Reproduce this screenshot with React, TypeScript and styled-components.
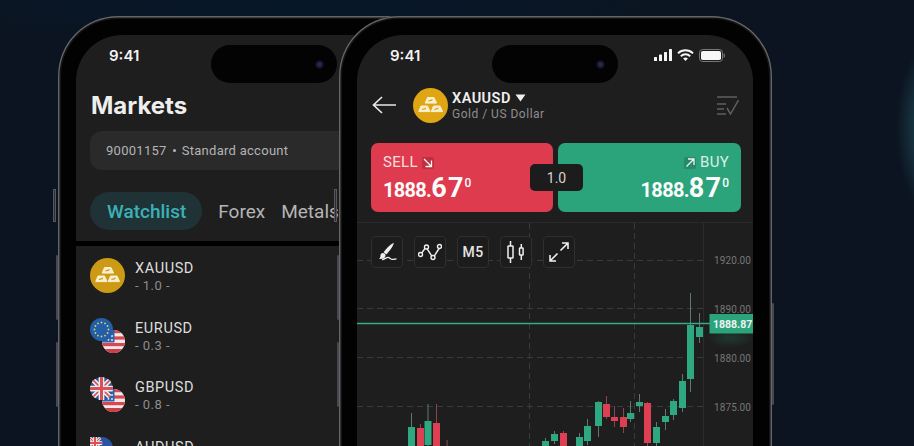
import React from "react";
import styled, { createGlobalStyle } from "styled-components";

const Global = createGlobalStyle`
  html, body { margin: 0; padding: 0; background: #0b1420; }
  body { font-family: "Roboto", "Liberation Sans", sans-serif; }
`;

const Canvas = styled.div`
  position: relative;
  width: 914px;
  height: 446px;
  overflow: hidden;
  background:
    radial-gradient(ellipse 34px 85px at 930px 128px, rgba(38, 92, 104, 0.85), rgba(38, 92, 104, 0) 100%),
    radial-gradient(ellipse 420px 50px at 300px 0, #07182b, rgba(7, 24, 43, 0) 100%),
    #0b1420;
`;

const Phone = styled.div<{ $left: number }>`
  position: absolute;
  left: ${(p) => p.$left}px;
  top: 16px;
  width: 433px;
  height: 700px;
  box-sizing: border-box;
  padding: 19px 19px 0 18px;
  background: #020202;
  border-radius: 60px;
  box-shadow: inset 0 0 0 1.4px #636568, inset 0 0 0 3px #141414;
`;

const VolumeKey = styled.div<{ $top: number; $h: number }>`
  position: absolute;
  left: -5px;
  top: ${(p) => p.$top}px;
  width: 3px;
  height: ${(p) => p.$h}px;
  background: #2a2c30;
  border: 1px solid #55585c;
  box-sizing: border-box;
`;

const RailKey = styled.div<{ $side: "left" | "right"; $top: number; $h: number }>`
  position: absolute;
  ${(p) => p.$side}: -2px;
  top: ${(p) => p.$top}px;
  width: 2px;
  height: ${(p) => p.$h}px;
  background: #45484c;
  border-radius: 1px;
`;

const Screen = styled.div`
  position: relative;
  display: flex;
  flex-direction: column;
  height: 100%;
  background: #1e1e1e;
  border-radius: 46px 46px 0 0;
  overflow: hidden;
`;

const Island = styled.div`
  position: absolute;
  top: 10px;
  left: 135px;
  width: 126px;
  height: 38px;
  border-radius: 19px;
  background: #030303;
  display: flex;
  align-items: center;
  justify-content: flex-end;
  padding-right: 13px;
  box-sizing: border-box;
`;

const Lens = styled.div`
  width: 9px;
  height: 9px;
  border-radius: 50%;
  background: radial-gradient(circle, #262a4a 0 25%, #0b0c1c 60%, #050510 100%);
`;

const StatusBar = styled.div`
  display: flex;
  align-items: center;
  justify-content: space-between;
  height: 40px;
  padding: 0 28px 0 33px;
  flex: none;
`;

const Clock = styled.span`
  font-family: "Inter", sans-serif;
  font-size: 15px;
  font-weight: 600;
  color: #f4f4f4;
`;

const StatusIcons = styled.div`
  display: flex;
  align-items: center;
  gap: 5px;
`;

const Title = styled.h1`
  margin: 0;
  padding: 16px 15px 0;
  height: 40px;
  flex: none;
  font-family: "Inter", sans-serif;
  font-size: 24px;
  line-height: 30px;
  font-weight: 700;
  color: #eeeeee;
`;

const AccountBar = styled.div`
  display: flex;
  align-items: center;
  flex: none;
  gap: 6px;
  height: 39px;
  margin-left: 14px;
  padding-left: 16px;
  width: 340px;
  box-sizing: border-box;
  border-radius: 12px;
  background: #2a2a2a;
  font-size: 13px;
  letter-spacing: 0.28px;
  color: #b4b4b4;
`;

const AccountDot = styled.span`
  width: 3px;
  height: 3px;
  border-radius: 50%;
  background: #b4b4b4;
`;

const Tabs = styled.div`
  display: flex;
  align-items: center;
  flex: none;
  gap: 16px;
  height: 38px;
  margin: 22px 0 11px 14px;
  font-size: 19px;
  color: #b5b5b5;
  white-space: nowrap;
`;

const ActiveTab = styled.div`
  display: flex;
  align-items: center;
  height: 38px;
  padding: 0 16px 0 17px;
  border-radius: 19px;
  background: #1f3235;
  color: #3bb1b7;
  font-weight: 500;
`;

const Tab = styled.span``;

const Separator = styled.div`
  height: 5px;
  flex: none;
  background: #000;
`;

const SymbolList = styled.div`
  display: flex;
  flex-direction: column;
`;

const SymbolRow = styled.div`
  display: flex;
  align-items: center;
  gap: 10px;
  height: 59.5px;
  flex: none;
  padding-left: 14px;
`;

const SymbolText = styled.div`
  display: flex;
  flex-direction: column;
  gap: 1px;
  padding-top: 2px;
`;

const SymbolName = styled.span`
  font-size: 14.5px;
  line-height: 17px;
  letter-spacing: 0.6px;
  color: #dedede;
`;

const SymbolValue = styled.span`
  font-size: 13px;
  line-height: 15px;
  letter-spacing: 0.5px;
  color: #8c8c8c;
`;

const Header = styled.div`
  display: flex;
  align-items: center;
  flex: none;
  height: 60px;
  padding: 0 14px 0 15px;
`;

const HeaderInfo = styled.div`
  display: flex;
  flex-direction: column;
  margin-left: 4px;
  padding-top: 1px;
  flex: 1;
`;

const HeaderSymbol = styled.div`
  display: flex;
  align-items: center;
  gap: 4px;
  font-size: 14.5px;
  line-height: 17px;
  font-weight: 600;
  letter-spacing: 0.45px;
  color: #f0f0f0;
`;

const HeaderSub = styled.span`
  font-size: 12px;
  line-height: 15px;
  letter-spacing: 0.5px;
  color: #8e8e8e;
`;

const BackButton = styled.div`
  display: flex;
  margin-right: 17px;
`;

const TradeBar = styled.div`
  position: relative;
  display: grid;
  grid-template-columns: 182px 183px;
  gap: 5px;
  flex: none;
  margin: 8px 0 10px 14px;
`;

const TradeCard = styled.div<{ $side: "sell" | "buy" }>`
  display: flex;
  flex-direction: column;
  align-items: ${(p) => (p.$side === "sell" ? "flex-start" : "flex-end")};
  height: 69px;
  box-sizing: border-box;
  padding: 11px 12px 0;
  border-radius: 7px;
  background: ${(p) => (p.$side === "sell" ? "#de3b4e" : "#2ba47c")};
  color: #fbfbfb;
`;

const TradeLabel = styled.div`
  display: flex;
  align-items: center;
  gap: 4px;
  font-size: 15px;
  line-height: 17px;
  letter-spacing: 0.3px;
  color: rgba(255, 255, 255, 0.84);
`;

const Chip = styled.span<{ $side: "sell" | "buy" }>`
  display: flex;
  align-items: center;
  justify-content: center;
  width: 12px;
  height: 12px;
  border-radius: 2px;
  background: ${(p) => (p.$side === "sell" ? "#bd3042" : "#248a69")};
`;

const Price = styled.div`
  margin-top: 3px;
  font-weight: 700;
  font-size: 20px;
  line-height: 28px;
  letter-spacing: -0.7px;
  white-space: nowrap;
`;

const PriceBig = styled.span`
  font-size: 27px;
  letter-spacing: 1.2px;
`;

const PriceSup = styled.span`
  font-size: 12px;
  font-weight: 500;
  line-height: 0;
  letter-spacing: 0;
  vertical-align: 10px;
`;

const LotBox = styled.div`
  position: absolute;
  left: 159px;
  top: 21px;
  width: 53px;
  height: 27px;
  display: flex;
  align-items: center;
  justify-content: center;
  border-radius: 5px;
  background: #1c1c1c;
  color: #d4d4d4;
  font-size: 14px;
`;

const ChartArea = styled.div`
  position: relative;
  flex: none;
  height: 240px;
  border-top: 1px solid #292929;
`;

const ChartSvg = styled.svg`
  display: block;
`;

const ChartTools = styled.div`
  position: absolute;
  top: 13px;
  left: 14px;
  display: flex;
  gap: 11px;
`;

const ToolButton = styled.div`
  display: flex;
  align-items: center;
  justify-content: center;
  width: 32px;
  height: 32px;
  box-sizing: border-box;
  border: 1.5px solid #2f2f2f;
  border-radius: 4px;
  background: #1c1c1c;
  color: #e4e4e4;
  font-size: 14px;
  font-weight: 500;
  letter-spacing: 0.4px;
`;

const Gold = ({ size, tone }: { size: number; tone: string }) => (
  <svg width={size} height={size} viewBox="0 0 35 35" style={{ flex: "none" }}>
    <circle cx="17.5" cy="17.5" r="17.5" fill={tone} />
    <g fill="#f8efd0" stroke="#f8efd0" strokeWidth="1" strokeLinejoin="round">
      <path d="M14.5 9.5h6.5l2.6 5.6H12.2z" />
      <path d="M8 18h6.5l2.6 5.6H5.7z" />
      <path d="M20.5 18H27l2.6 5.6H18.2z" />
    </g>
    <g fill={tone}>
      <path d="M15.3 12.4l4.4-1.3-0.5 1.7-3.9 0.8z" />
      <path d="M8.8 20.9l4.4-1.3-0.5 1.7-3.9 0.8z" />
      <path d="M21.3 20.9l4.4-1.3-0.5 1.7-3.9 0.8z" />
    </g>
  </svg>
);

const UsFlag = ({ id }: { id: string }) => (
  <g clipPath={`url(#${id})`}>
    <clipPath id={id}>
      <circle cx="23.5" cy="23.5" r="11.5" />
    </clipPath>
    <rect x="12" y="12" width="23" height="23" fill="#f0e9e9" />
    <rect x="12" y="12" width="23" height="3.2" fill="#d8464f" />
    <rect x="12" y="18.4" width="23" height="3.2" fill="#d8464f" />
    <rect x="12" y="25" width="23" height="3.2" fill="#d8464f" />
    <rect x="12" y="31" width="23" height="4" fill="#c9404a" />
    <rect x="12" y="12" width="12.5" height="12.5" fill="#2f62a8" />
    <g fill="#f2f2f2">
      <circle cx="18.5" cy="21.8" r="0.9" />
      <circle cx="22" cy="18" r="0.9" />
      <circle cx="22" cy="22" r="0.9" />
    </g>
  </g>
);

const UnionJack = ({ cx, cy, r, id }: { cx: number; cy: number; r: number; id: string }) => (
  <g clipPath={`url(#${id})`}>
    <clipPath id={id}>
      <circle cx={cx} cy={cy} r={r} />
    </clipPath>
    <circle cx={cx} cy={cy} r={r} fill="#34508f" />
    <path
      d={`M${cx - r} ${cy - r}L${cx + r} ${cy + r}M${cx + r} ${cy - r}L${cx - r} ${cy + r}`}
      stroke="#eeeeee"
      strokeWidth={r * 0.42}
    />
    <path
      d={`M${cx - r} ${cy - r}L${cx + r} ${cy + r}M${cx + r} ${cy - r}L${cx - r} ${cy + r}`}
      stroke="#d8505a"
      strokeWidth={r * 0.14}
    />
    <path d={`M${cx} ${cy - r}V${cy + r}M${cx - r} ${cy}H${cx + r}`} stroke="#eeeeee" strokeWidth={r * 0.5} />
    <path d={`M${cx} ${cy - r}V${cy + r}M${cx - r} ${cy}H${cx + r}`} stroke="#d8505a" strokeWidth={r * 0.26} />
  </g>
);

const euStars = Array.from({ length: 12 }, (_, i) => {
  const a = (i * Math.PI) / 6;
  return { x: 11.5 + 7 * Math.cos(a), y: 11.5 + 7 * Math.sin(a) };
});

const PairIcon = ({ base }: { base: "eu" | "gb" | "au" }) => (
  <svg width="35" height="35" viewBox="0 0 35 35" style={{ flex: "none" }}>
    <UsFlag id={`us-${base}`} />
    {base === "eu" && (
      <g>
        <circle cx="11.5" cy="11.5" r="11.5" fill="#235ea8" />
        {euStars.map((s, i) => (
          <circle key={i} cx={s.x} cy={s.y} r="0.9" fill="#d8cf74" />
        ))}
      </g>
    )}
    {base === "gb" && <UnionJack cx={11.5} cy={11.5} r={11.5} id="gb-main" />}
    {base === "au" && (
      <g>
        <circle cx="11.5" cy="11.5" r="11.5" fill="#2a55a4" />
        <UnionJack cx={5} cy={6} r={7.5} id="au-jack" />
      </g>
    )}
  </svg>
);

const Signal = () => (
  <svg width="18" height="12" viewBox="0 0 18 12">
    <g fill="#f5f5f5">
      <rect x="0" y="8" width="3" height="4" rx="0.6" />
      <rect x="5" y="5.5" width="3" height="6.5" rx="0.6" />
      <rect x="10" y="3" width="3" height="9" rx="0.6" />
      <rect x="15" y="0" width="3" height="12" rx="0.6" />
    </g>
  </svg>
);

const Wifi = () => (
  <svg width="17" height="12" viewBox="0 0 17 12" fill="none" stroke="#f5f5f5" strokeWidth="2">
    <path d="M1 4.4a10.8 10.8 0 0 1 15 0" />
    <path d="M3.8 7.2a6.8 6.8 0 0 1 9.4 0" />
    <path d="M8.5 12L6.1 9.6a3.4 3.4 0 0 1 4.8 0z" fill="#f5f5f5" stroke="none" />
  </svg>
);

const Battery = () => (
  <svg width="26" height="13" viewBox="0 0 26 13">
    <rect x="0.5" y="0.5" width="23" height="12" rx="3.2" fill="none" stroke="#777" />
    <rect x="2" y="2" width="20" height="9" rx="1.8" fill="#f7f7f7" />
    <rect x="24.6" y="4.5" width="1.2" height="4" rx="0.6" fill="#777" />
  </svg>
);

const BackArrow = () => (
  <svg width="24" height="18" viewBox="0 0 24 18" fill="none" stroke="#e6e6e6" strokeWidth="1.7">
    <path d="M24 9H1.5M10 1L1.5 9l8.5 8" />
  </svg>
);

const CheckList = () => (
  <svg width="22" height="19" viewBox="0 0 22 19" fill="none" stroke="#5f5f5f" strokeWidth="1.5">
    <path d="M0 1h20M0 8h9M0 13h7M0 18h9M10 12l3.5 6L21.5 4" />
  </svg>
);

const Triangle = () => (
  <svg width="11" height="8" viewBox="0 0 11 8">
    <path d="M0.5 0.5h10L5.5 7.5z" fill="#eeeeee" />
  </svg>
);

const ChipArrow = ({ dir }: { dir: "down" | "up" }) => (
  <svg width="10" height="10" viewBox="0 0 10 10" fill="none" stroke="#f4f4f4" strokeWidth="1.3">
    {dir === "down" ? <path d="M1 1l7.5 7.5M8.5 2.5v6h-6" /> : <path d="M1.5 8.5L9 1M3 1h6v6" />}
  </svg>
);

const BrushIcon = () => (
  <svg width="21" height="20" viewBox="0 0 21 20" fill="none">
    <path d="M16.8 0.8c-.6 3.6-4.4 8.6-7.6 11.6L6.6 10.2C9.2 6.6 13 2.8 16.8 0.8z" fill="#efefef" />
    <path d="M5.6 11c1.8 0 3 1.2 2.9 2.8-.1 1.9-2.2 3.4-6.4 3.2 1.5-1.3 1.2-2.6 1.4-3.8.2-1.2 1-2.2 2.1-2.2z" fill="#efefef" />
    <path d="M5 17.6c2.6 0 4-2.2 6-2.2s2.4 2 4.5 2 2.5-.6 4-.6" stroke="#efefef" strokeWidth="1.3" />
  </svg>
);

const LineIcon = () => (
  <svg width="24" height="18" viewBox="0 0 24 18" fill="none" stroke="#efefef" strokeWidth="1.4">
    <path d="M3 11l5-7 7 11 7-11" />
    <circle cx="2.5" cy="11.5" r="2" fill="#1c1c1c" />
    <circle cx="8.5" cy="4" r="2" fill="#1c1c1c" />
    <circle cx="15" cy="14.5" r="2" fill="#1c1c1c" />
    <circle cx="21.5" cy="3.5" r="2" fill="#1c1c1c" />
  </svg>
);

const CandleIcon = () => (
  <svg width="20" height="22" viewBox="0 0 20 22" fill="none" stroke="#efefef" strokeWidth="1.5">
    <rect x="2" y="5" width="5" height="12" rx="0.6" />
    <path d="M4.5 0v5M4.5 17v5" />
    <rect x="13.5" y="7" width="3.6" height="7" rx="0.6" />
    <path d="M15.3 3v4M15.3 14v5" />
  </svg>
);

const ExpandIcon = () => (
  <svg width="20" height="20" viewBox="0 0 20 20" fill="none" stroke="#efefef" strokeWidth="1.6">
    <path d="M11.5 8.5L19 1M13 1h6v6M8.5 11.5L1 19M7 19H1v-6" />
  </svg>
);

type Candle = { x: number; w: number; o: number; c: number; hi: number; lo: number; up: boolean };

const c = (x: number, o: number, cl: number, hi: number, lo: number, up: boolean): Candle => ({
  x,
  w: 7,
  o,
  c: cl,
  hi,
  lo,
  up,
});

const candles: Candle[] = [
  c(408, 427, 450, 413, 450, true),
  c(417, 428, 450, 424, 450, false),
  c(424.5, 421, 445, 404, 447, true),
  c(433, 423, 450, 404, 450, false),
  c(443.6, 446, 450, 440, 450, false),
  c(542, 441, 450, 438, 450, true),
  c(551, 434, 441, 431, 444, true),
  c(560, 433, 450, 431, 450, false),
  c(576, 437, 450, 433, 450, true),
  c(584, 426, 441, 419, 445, true),
  c(595, 402, 426, 401, 437, true),
  c(603, 404, 417, 396, 419, false),
  c(611, 417, 421, 406, 427, false),
  c(620, 417, 427, 408, 433, false),
  c(627, 413, 419, 401, 422, true),
  c(636, 402, 406, 394, 412, true),
  c(644, 403, 443, 402, 447, false),
  c(653, 427, 443, 422, 447, true),
  c(662, 416, 422, 409, 430, true),
  c(670, 401, 415, 399, 420, true),
  c(679, 381, 408, 374, 412, true),
  c(687, 325, 379, 293, 392, true),
  c(696, 327, 337, 313, 343, true),
];

const grid = [260, 308, 357, 406];
const axis = [
  { y: 264, t: "1920.00" },
  { y: 313, t: "1890.00" },
  { y: 362, t: "1880.00" },
  { y: 410.5, t: "1875.00" },
];

const Chart = () => (
  <ChartSvg width="396" height="240" viewBox="357 223 396 240">
    <defs>
      <radialGradient id="tagGlow">
        <stop offset="0%" stopColor="#2ba47c" stopOpacity="0.2" />
        <stop offset="100%" stopColor="#2ba47c" stopOpacity="0" />
      </radialGradient>
    </defs>
    <g stroke="#3a3a3a" strokeWidth="1" strokeDasharray="6 4">
      {grid.map((y) => (
        <line key={y} x1="357" x2="703" y1={y + 0.5} y2={y + 0.5} />
      ))}
      <line x1="529.5" x2="529.5" y1="223" y2="446" />
      <line x1="634.5" x2="634.5" y1="223" y2="446" />
    </g>
    <line x1="703.5" x2="703.5" y1="223" y2="446" stroke="#2c2c2c" />
    {axis.map((a) => (
      <text key={a.t} x="714" y={a.y} fontFamily="Roboto, sans-serif" fontSize="10" letterSpacing="0.1" fill="#767676">
        {a.t}
      </text>
    ))}
    {candles.map((k) => {
      const color = k.up ? "#2ea880" : "#de3f52";
      return (
        <g key={k.x}>
          <line x1={k.x + k.w / 2} x2={k.x + k.w / 2} y1={k.hi} y2={k.lo} stroke={k.up ? "#5d7a70" : "#8a4650"} />
          <rect x={k.x} y={k.o} width={k.w} height={k.c - k.o} fill={color} />
        </g>
      );
    })}
    <line x1="357" x2="710" y1="323.5" y2="323.5" stroke="#35aa84" strokeWidth="1.5" />
    <ellipse cx="731" cy="338" rx="24" ry="10" fill="url(#tagGlow)" />
    <rect x="709.5" y="314" width="43.5" height="19.5" fill="#2ba47c" />
    <text x="713" y="327.5" fontFamily="Roboto, sans-serif" fontSize="10.5" fontWeight="700" fill="#f2f2f2">
      1888.87
    </text>
  </ChartSvg>
);

const PhoneKeys = () => (
  <>
    <VolumeKey $top={173} $h={33} />
    <RailKey $side="left" $top={239} $h={65} />
    <RailKey $side="left" $top={326} $h={65} />
    <RailKey $side="right" $top={287} $h={102} />
  </>
);

const rows = [
  { name: "XAUUSD", value: "- 1.0 -", icon: <Gold size={35} tone="#cc9a14" /> },
  { name: "EURUSD", value: "- 0.3 -", icon: <PairIcon base="eu" /> },
  { name: "GBPUSD", value: "- 0.8 -", icon: <PairIcon base="gb" /> },
  { name: "AUDUSD", value: "- 0.5 -", icon: <PairIcon base="au" /> },
];

export default function App() {
  return (
    <Canvas>
      <Global />
      <Phone $left={58}>
        <PhoneKeys />
        <Screen>
          <Island>
            <Lens />
          </Island>
          <StatusBar>
            <Clock>9:41</Clock>
          </StatusBar>
          <Title>Markets</Title>
          <AccountBar>
            <span>90001157</span>
            <AccountDot />
            <span>Standard account</span>
          </AccountBar>
          <Tabs>
            <ActiveTab>Watchlist</ActiveTab>
            <Tab>Forex</Tab>
            <Tab>Metals</Tab>
          </Tabs>
          <Separator />
          <SymbolList>
            {rows.map((r) => (
              <SymbolRow key={r.name}>
                {r.icon}
                <SymbolText>
                  <SymbolName>{r.name}</SymbolName>
                  <SymbolValue>{r.value}</SymbolValue>
                </SymbolText>
              </SymbolRow>
            ))}
          </SymbolList>
        </Screen>
      </Phone>
      <Phone $left={339}>
        <PhoneKeys />
        <Screen>
          <Island>
            <Lens />
          </Island>
          <StatusBar>
            <Clock>9:41</Clock>
            <StatusIcons>
              <Signal />
              <Wifi />
              <Battery />
            </StatusIcons>
          </StatusBar>
          <Header>
            <BackButton>
              <BackArrow />
            </BackButton>
            <Gold size={35} tone="#dfa512" />
            <HeaderInfo>
              <HeaderSymbol>
                XAUUSD <Triangle />
              </HeaderSymbol>
              <HeaderSub>Gold / US Dollar</HeaderSub>
            </HeaderInfo>
            <CheckList />
          </Header>
          <TradeBar>
            <TradeCard $side="sell">
              <TradeLabel>
                SELL
                <Chip $side="sell">
                  <ChipArrow dir="down" />
                </Chip>
              </TradeLabel>
              <Price>
                1888.<PriceBig>67</PriceBig>
                <PriceSup>0</PriceSup>
              </Price>
            </TradeCard>
            <TradeCard $side="buy">
              <TradeLabel>
                <Chip $side="buy">
                  <ChipArrow dir="up" />
                </Chip>
                BUY
              </TradeLabel>
              <Price>
                1888.<PriceBig>87</PriceBig>
                <PriceSup>0</PriceSup>
              </Price>
            </TradeCard>
            <LotBox>1.0</LotBox>
          </TradeBar>
          <ChartArea>
            <Chart />
            <ChartTools>
              <ToolButton>
                <BrushIcon />
              </ToolButton>
              <ToolButton>
                <LineIcon />
              </ToolButton>
              <ToolButton>M5</ToolButton>
              <ToolButton>
                <CandleIcon />
              </ToolButton>
              <ToolButton>
                <ExpandIcon />
              </ToolButton>
            </ChartTools>
          </ChartArea>
        </Screen>
      </Phone>
    </Canvas>
  );
}
